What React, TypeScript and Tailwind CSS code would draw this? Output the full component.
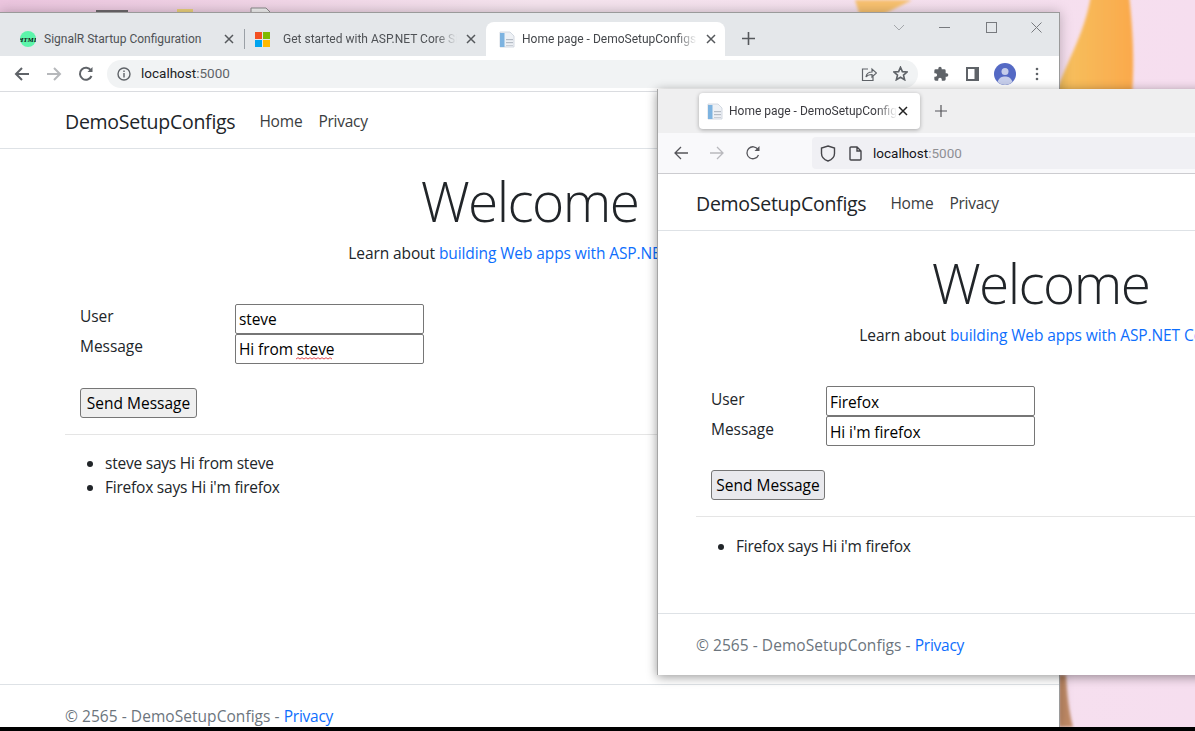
import type { ReactNode } from 'react'

const pageFont = "font-['Open_Sans','Noto_Sans',sans-serif]"
const uiFont = "font-['Roboto','Noto_Sans',sans-serif]"
const tabFade = '[mask-image:linear-gradient(to_right,black_88%,transparent)]'

function Wallpaper() {
  return (
    <svg className="absolute inset-0" width="1195" height="731" viewBox="0 0 1195 731">
      <defs>
        <linearGradient id="wall" x1="0" y1="0" x2="1" y2="0">
          <stop offset="0" stopColor="#ecc6df" />
          <stop offset="0.45" stopColor="#f5e4ee" />
          <stop offset="1" stopColor="#f6deef" />
        </linearGradient>
        <linearGradient id="leaf" x1="0" y1="0" x2="1" y2="0">
          <stop offset="0" stopColor="#f6c25f" />
          <stop offset="1" stopColor="#faa94c" />
        </linearGradient>
        <filter id="soft">
          <feGaussianBlur stdDeviation="1.5" />
        </filter>
      </defs>
      <rect width="1195" height="731" fill="url(#wall)" />
      <path d="M855 0 L912 0 L880 16 L860 16 Z" fill="#f9c270" filter="url(#soft)" />
      <path d="M1091 -5 L1129 -5 C1134 40 1134 70 1132 95 L1056 95 C1062 70 1085 35 1091 -5 Z" fill="url(#leaf)" filter="url(#soft)" />
      <path d="M1059 675 L1066 675 C1067 695 1069 712 1073 727 L1059 727 Z" fill="#c08a66" filter="url(#soft)" />
      {/* taskbar bits poking out above the window */}
      <rect x="96" y="10" width="32" height="2" fill="#6f6a6e" />
      <rect x="177" y="9" width="16" height="3" fill="#ecd27c" />
      <path d="M251 12 V8 H266 L270 12" fill="#f3f3f3" stroke="#8a8a8a" />
    </svg>
  )
}

function CloseX({ className = '', size = 10 }: { className?: string; size?: number }) {
  return (
    <svg className={className} width={size} height={size} viewBox="0 0 10 10" fill="none" stroke="currentColor" strokeWidth="1.5">
      <path d="M1 1 L9 9 M9 1 L1 9" />
    </svg>
  )
}

function PageFavicon() {
  return (
    <svg width="16" height="17" viewBox="0 0 16 17">
      <path d="M1 1 H11 L15 5 V16 H1 Z" fill="#eef1f5" stroke="#c9d1da" strokeWidth="0.8" />
      <rect x="1" y="2" width="4.5" height="14" fill="#7db3e0" />
      <rect x="7" y="8" width="7" height="1.2" fill="#b5bcc5" />
      <rect x="7" y="11" width="7" height="1.2" fill="#b5bcc5" />
      <rect x="7" y="14" width="7" height="1" fill="#c9ced5" />
    </svg>
  )
}

function HtmlFavicon() {
  return (
    <svg width="16" height="16" viewBox="0 0 16 16">
      <circle cx="8" cy="8" r="8" fill="#5cf5ab" />
      <text x="8" y="10.5" textAnchor="middle" fontSize="7" fontWeight="700" fontStyle="italic" fill="#111" fontFamily="Liberation Serif, serif">
        HTML
      </text>
    </svg>
  )
}

function MsLogo() {
  return (
    <svg width="15" height="15" viewBox="0 0 15 15">
      <rect width="7" height="7" fill="#f25022" />
      <rect x="8" width="7" height="7" fill="#7fba00" />
      <rect y="8" width="7" height="7" fill="#00a4ef" />
      <rect x="8" y="8" width="7" height="7" fill="#ffb900" />
    </svg>
  )
}

function Arrow({ dir, color, width = 2 }: { dir: 'left' | 'right'; color: string; width?: number }) {
  return (
    <svg width="16" height="16" viewBox="0 0 16 16" fill="none" stroke={color} strokeWidth={width}>
      {dir === 'left' ? <path d="M15 8 H2 M8 2 L2 8 L8 14" /> : <path d="M1 8 H14 M8 2 L14 8 L8 14" />}
    </svg>
  )
}

function Reload({ color, width = 2 }: { color: string; width?: number }) {
  return (
    <svg width="16" height="16" viewBox="0 0 16 16" fill="none" stroke={color} strokeWidth={width}>
      <path d="M13.5 10 A6 6 0 1 1 13 4.5" />
      <path d="M14.5 1 V6 H9.5 Z" fill={color} stroke="none" />
    </svg>
  )
}

function ChromeWindowBar() {
  return (
    <>
      <div className={`flex h-[43px] items-end bg-[#e4e7ea] text-[12px] text-[#4f5256] ${uiFont}`}>
        <div className="flex h-[34px] w-[244px] shrink-0 items-center pl-[20px]">
          <HtmlFavicon />
          <span className="ml-[8px] w-[177px] whitespace-nowrap">SignalR Startup Configuration</span>
          <CloseX className="ml-[3px] text-[#55585c]" />
        </div>
        <div className="mb-[7px] h-[20px] w-px shrink-0 bg-[#9aa0a6]" />
        <div className="flex h-[34px] w-[241px] shrink-0 items-center pl-[10px]">
          <MsLogo />
          <span className={`ml-[13px] w-[174px] overflow-hidden whitespace-nowrap ${tabFade}`}>Get started with ASP.NET Core SignalR</span>
          <CloseX className="ml-[9px] text-[#55585c]" />
        </div>
        <div className="flex h-[34px] w-[239px] shrink-0 items-center rounded-t-[8px] bg-white pl-[13px]">
          <PageFavicon />
          <span className={`ml-[7px] w-[175px] overflow-hidden whitespace-nowrap text-[#44474b] ${tabFade}`}>Home page - DemoSetupConfigs</span>
          <CloseX className="ml-[9px] text-[#55585c]" />
        </div>
        <svg className="mb-[11px] ml-[17px] shrink-0" width="13" height="13" viewBox="0 0 13 13" stroke="#55585c" strokeWidth="1.6">
          <path d="M6.5 0 V13 M0 6.5 H13" />
        </svg>
        <div className="mb-[23px] ml-auto flex items-center gap-[31px] pr-[17px] text-[#777a7e]">
          <svg className="mr-[3px]" width="12" height="7" viewBox="0 0 12 7" fill="none" stroke="#a4a7ab" strokeWidth="1">
            <path d="M1 1 L6 6 L11 1" />
          </svg>
          <svg width="11" height="11" viewBox="0 0 11 11" stroke="currentColor" strokeWidth="1">
            <path d="M0 5.5 H11" />
          </svg>
          <svg className="ml-[5px]" width="11" height="11" viewBox="0 0 11 11" fill="none" stroke="currentColor" strokeWidth="1">
            <rect x="0.5" y="0.5" width="10" height="10" />
          </svg>
          <svg className="ml-[3px]" width="11" height="11" viewBox="0 0 11 11" stroke="currentColor" strokeWidth="1">
            <path d="M0.5 0.5 L10.5 10.5 M10.5 0.5 L0.5 10.5" />
          </svg>
        </div>
      </div>
      <div className="flex h-[36px] items-center border-b border-[#dadce0] bg-white pl-[14px]">
        <Arrow dir="left" color="#5f6368" />
        <div className="ml-[16px]">
          <Arrow dir="right" color="#b6b8bb" />
        </div>
        <div className="ml-[16px]">
          <Reload color="#5f6368" />
        </div>
        <div className="ml-[13px] flex h-[28px] w-[811px] shrink-0 items-center rounded-full bg-[#f1f3f4] pl-[10px] pr-[10px]">
          <svg width="14" height="14" viewBox="0 0 14 14" fill="none" stroke="#5f6368" strokeWidth="1.4">
            <circle cx="7" cy="7" r="6" />
            <path d="M7 6 V10.5 M7 3.4 V5" />
          </svg>
          <span className={`ml-[10px] text-[13.5px] text-[#5f6368] ${uiFont}`}>
            <span className="text-[#202124]">localhost</span>:5000
          </span>
          <svg className="ml-auto" width="16" height="16" viewBox="0 0 16 16" fill="none" stroke="#5f6368" strokeWidth="1.2">
            <path d="M7 3 H1.5 V14.5 H12 V10 M5 11 C5.5 7.5 8 6 11 6 V3 L15.5 7 L11 11 V8.5 C8.5 8.5 6.5 9 5 11 Z" />
          </svg>
          <svg className="ml-[16px]" width="15" height="15" viewBox="0 0 24 24" fill="none" stroke="#5f6368" strokeWidth="2.6">
            <path d="M12 2 L15 9 L22.5 9.6 L16.8 14.6 L18.6 22 L12 18 L5.4 22 L7.2 14.6 L1.5 9.6 L9 9 Z" />
          </svg>
        </div>
        <svg className="ml-[15px]" width="16" height="16" viewBox="0 0 24 24" fill="#5f6368">
          <path d="M20.5 11H19V7a2 2 0 0 0-2-2h-4V3.5a2.5 2.5 0 0 0-5 0V5H4a2 2 0 0 0-2 2v3.8h1.5a2.7 2.7 0 0 1 0 5.4H2V20a2 2 0 0 0 2 2h3.8v-1.5a2.7 2.7 0 0 1 5.4 0V22H17a2 2 0 0 0 2-2v-4h1.5a2.5 2.5 0 0 0 0-5z" />
        </svg>
        <svg className="ml-[17px]" width="13" height="14" viewBox="0 0 13 14">
          <rect width="13" height="14" fill="#5f6368" />
          <rect x="2" y="2" width="6.5" height="10" fill="#fff" />
        </svg>
        <svg className="ml-[15px]" width="22" height="22" viewBox="0 0 22 22">
          <circle cx="11" cy="11" r="11" fill="#5469c4" />
          <circle cx="11" cy="8.5" r="3.5" fill="#c5cdea" />
          <path d="M3.5 19 C5 14.5 8 13.5 11 13.5 C14 13.5 17 14.5 18.5 19 A11 11 0 0 1 3.5 19 Z" fill="#c5cdea" />
        </svg>
        <svg className="ml-[19px]" width="4" height="14" viewBox="0 0 4 14" fill="#5f6368">
          <circle cx="2" cy="2" r="1.3" />
          <circle cx="2" cy="7" r="1.3" />
          <circle cx="2" cy="12" r="1.3" />
        </svg>
      </div>
    </>
  )
}

function FirefoxWindowBar() {
  return (
    <>
      <div className={`flex h-[44px] items-center bg-[#efeff0] pl-[41px] text-[12px] text-[#3b3b40] ${uiFont}`}>
        <div className="flex h-[36px] w-[221px] shrink-0 items-center rounded-[4px] bg-white pl-[8px] shadow-[0_1px_4px_rgba(0,0,0,0.3)]">
          <PageFavicon />
          <span className={`ml-[6px] w-[168px] overflow-hidden whitespace-nowrap ${tabFade}`}>Home page - DemoSetupConfigs</span>
          <CloseX className="ml-[1px] text-[#222]" />
        </div>
        <svg className="ml-[15px]" width="12" height="12" viewBox="0 0 12 12" stroke="#55555a" strokeWidth="1.2">
          <path d="M6 0 V12 M0 6 H12" />
        </svg>
      </div>
      <div className="flex h-[41px] items-center border-b border-[#ccccd0] bg-[#f9f9fb] pl-[15px]">
        <Arrow dir="left" color="#55555a" width={1.3} />
        <div className="ml-[20px]">
          <Arrow dir="right" color="#b9b9bd" width={1.3} />
        </div>
        <div className="ml-[20px]">
          <Reload color="#55555a" width={1.3} />
        </div>
        <div className="ml-[51px] flex h-[32px] w-[600px] shrink-0 items-center rounded-[4px] bg-[#f0f0f4] pl-[8px]">
          <svg width="16" height="17" viewBox="0 0 16 17" fill="none" stroke="#45454a" strokeWidth="1.4">
            <path d="M8 1 L14.5 3 V8.5 C14.5 12 11.5 14.8 8 16 C4.5 14.8 1.5 12 1.5 8.5 V3 Z" />
          </svg>
          <svg className="ml-[13px]" width="13" height="15" viewBox="0 0 13 15" fill="none" stroke="#45454a" strokeWidth="1.4">
            <path d="M1 2 Q1 1 2 1 H8 L12 5 V13 Q12 14 11 14 H2 Q1 14 1 13 Z M8 1 V5 H12" />
          </svg>
          <span className={`ml-[11px] text-[13.5px] text-[#8f8f94] ${uiFont}`}>
            <span className="text-[#15141a]">localhost</span>:5000
          </span>
        </div>
      </div>
    </>
  )
}

function Field({ label, value, inputClass, labelClass }: { label: string; value: string; inputClass: string; labelClass: string }) {
  return (
    <div className="flex">
      <span className={`${labelClass} shrink-0 text-[15.5px] leading-[24px] tracking-[-0.05px] text-[#212529]`}>{label}</span>
      <input
        readOnly
        value={value}
        className={`${inputClass} h-[30px] rounded-[2px] border border-[#767676] bg-white px-[3px] text-[15.5px] tracking-[-0.1px] text-black outline-none`}
      />
    </div>
  )
}

function Page({
  left,
  listClass,
  inputClass,
  labelClass,
  messages,
  button,
  values,
}: {
  left: string
  listClass: string
  inputClass: string
  labelClass: string
  messages: string[]
  button: string
  values: [string, string]
}) {
  return (
    <div className={`bg-white ${pageFont}`}>
      <nav className={`flex h-[57px] items-center border-b border-[#dee2e6] pt-[3px] ${left}`}>
        <span className="text-[19.5px] tracking-[-0.27px] text-[#212529]">DemoSetupConfigs</span>
        <span className="ml-[24px] text-[15.5px] tracking-[-0.2px] text-[#3a3d40]">Home</span>
        <span className="ml-[16px] text-[15.5px] tracking-[-0.25px] text-[#3a3d40]">Privacy</span>
      </nav>
      <div className="flex flex-col items-center pt-[19px]">
        <h1 className="text-[55px] leading-[66px] font-light tracking-[-1.6px] text-[#212529]">Welcome</h1>
        <p className="mt-[7px] text-[15.5px] leading-[24px] tracking-[-0.1px] whitespace-nowrap text-[#212529]">
          Learn about <span className="text-[#0d6efd]">building Web apps with ASP.NET Core</span>.
        </p>
      </div>
      <div className={`${left} pr-[30px]`}>
        <div className="pt-[39px] pl-[15px]">
          <Field label="User" value={values[0]} inputClass={inputClass} labelClass={labelClass} />
          <Field label="Message" value={values[1]} inputClass={inputClass} labelClass={labelClass} />
          <button className={`${button} mt-[24px] block h-[30px] rounded-[3px] border border-[#767676] pt-[1px] text-[15.5px] text-black`}>Send Message</button>
        </div>
        <hr className="mt-[16px] border-[#e5e5e5]" />
      </div>
      <ul className={`${listClass} list-disc text-[15.5px] leading-[24px] tracking-[-0.22px] text-[#212529]`}>
        {messages.map((m) => (
          <li key={m}>{m}</li>
        ))}
      </ul>
    </div>
  )
}

function Footer({ left, children }: { left: string; children: ReactNode }) {
  return (
    <footer className={`border-t border-[#dee2e6] pt-[20px] ${left} text-[15.5px] tracking-[0.05px] text-[#6c757d] ${pageFont}`}>
      {children} - <span className="tracking-[-0.25px] text-[#0d6efd]">Privacy</span>
    </footer>
  )
}

export default function App() {
  return (
    <div className="h-[731px] w-[1195px] overflow-hidden">
      <div className="relative h-[727px] overflow-hidden">
        <Wallpaper />

        {/* Chrome window */}
        <div className="absolute top-[12px] left-0 h-[715px] w-[1060px] overflow-hidden border-t border-r border-[#9a9a9a] bg-white shadow-[0_0_12px_rgba(0,0,0,0.25)]">
          <ChromeWindowBar />
          <Page
            left="pl-[65px]"
            listClass="pt-[16px] pl-[105px]"
            inputClass="w-[189px]"
            labelClass="w-[155px]"
            messages={['steve says Hi from steve', "Firefox says Hi i'm firefox"]}
            button="w-[117px] bg-[#efefef]"
            values={['steve', 'Hi from steve']}
          />
          <div className="mt-[185px]">
            <Footer left="pl-[65px]">© 2565 - DemoSetupConfigs</Footer>
          </div>
          {/* spellcheck squiggle under the second "steve" */}
          <svg className="absolute top-[344px] left-[296px]" width="37" height="3" viewBox="0 0 37 3" fill="none" stroke="#e0393e" strokeWidth="0.9">
            <path d="M0 2 L2 0.7 L4 2 L6 0.7 L8 2 L10 0.7 L12 2 L14 0.7 L16 2 L18 0.7 L20 2 L22 0.7 L24 2 L26 0.7 L28 2 L30 0.7 L32 2 L34 0.7 L36 2" />
          </svg>
        </div>

        {/* Firefox window, runs past the right edge of the shot */}
        <div className="absolute top-[89px] left-[657px] h-[586px] w-[766px] overflow-hidden border-l border-[#a5a5a5] bg-white shadow-[0_2px_10px_rgba(0,0,0,0.4)]">
          <FirefoxWindowBar />
          <Page
            left="pl-[38px]"
            listClass="pt-[17px] pl-[78px]"
            inputClass="w-[209px] pt-[1px]"
            labelClass="w-[115px] pt-[1px]"
            messages={["Firefox says Hi i'm firefox"]}
            button="w-[114px] bg-[#e9e9ed]"
            values={['Firefox', "Hi i'm firefox"]}
          />
          <div className="mt-[55px]">
            <Footer left="pl-[38px]">© 2565 - DemoSetupConfigs</Footer>
          </div>
        </div>
      </div>
      <div className="h-[4px] bg-black" />
    </div>
  )
}
